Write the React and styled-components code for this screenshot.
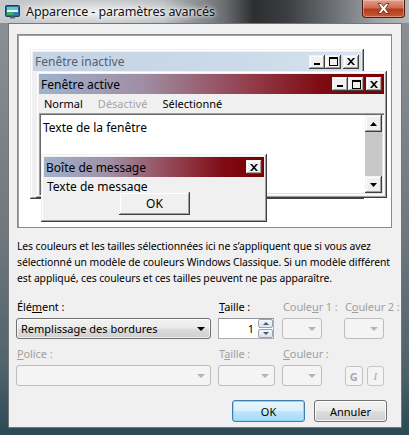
import React from 'react';
import styled, { createGlobalStyle, css } from 'styled-components';

const GlobalStyle = createGlobalStyle`
  html, body {
    margin: 0;
    padding: 0;
    background: #ffffff;
  }
  body {
    font-family: "Noto Sans", "Open Sans", sans-serif;
    font-size: 11px;
    color: #000;
  }
`;

const UI = `"Noto Sans", "Open Sans", sans-serif`;
const CLASSIC = `"Noto Sans", "DejaVu Sans", sans-serif`;

const Frame = styled.div`
  width: 409px;
  height: 435px;
  box-sizing: border-box;
  display: flex;
  flex-direction: column;
  background: linear-gradient(180deg, #8d9296 0%, #6f777c 55%, #4f626a 85%, #2c4955 100%);
  padding: 0 7px 7px 8px;
  font-family: ${UI};
  overflow: hidden;
`;

const TitleBar = styled.div`
  height: 23px;
  margin: 0 -7px 0 -8px;
  display: flex;
  align-items: center;
  position: relative;
  background:
    radial-gradient(ellipse 160px 22px at 100px 12px, rgba(255, 255, 255, 0.75), rgba(255, 255, 255, 0) 70%),
    linear-gradient(90deg, #c4c8cb 0%, #b6babd 40%, #6a6d70 55%, #2d2e30 62%, #3b3d40 70%, #6e7276 82%, #9ea3a7 92%, #b4b8bb 100%);
`;

const AppIcon = styled.svg`
  width: 15px;
  height: 15px;
  margin: 0 6px 0 5px;
`;

const TitleText = styled.span`
  font-size: 12.5px;
  color: #111;
  letter-spacing: -0.1px;
  text-shadow: 0 0 6px #fff, 0 0 3px #fff;
`;

const CloseButton = styled.div`
  position: absolute;
  right: 4px;
  top: 0;
  width: 43px;
  height: 18px;
  border: 1px solid #4a1c12;
  border-top: none;
  border-radius: 0 0 4px 4px;
  box-sizing: border-box;
  background: linear-gradient(180deg, #e2a08c 0%, #d06c50 45%, #b43a1c 55%, #c85a36 100%);
  display: flex;
  align-items: center;
  justify-content: center;
  box-shadow: inset 0 0 0 1px rgba(255, 220, 200, 0.4);
`;

const Client = styled.div`
  flex: 1;
  background: #f0f0f0;
  border: 1px solid #70767a;
  display: flex;
  flex-direction: column;
  padding: 10px 14px 0 8px;
  box-sizing: border-box;
`;

const Preview = styled.div`
  position: relative;
  height: 192px;
  margin-right: -5px;
  background: #ffffff;
  border: 1px solid #8a8a8a;
  box-shadow: inset 1px 1px 0 #a0a0a0;
  overflow: hidden;
`;

const raised = css`
  background: #f0f0f0;
  box-shadow:
    inset -1px -1px 0 #404040,
    inset 1px 1px 0 #f0f0f0,
    inset -2px -2px 0 #a0a0a0,
    inset 2px 2px 0 #ffffff;
`;

const MiniWindow = styled.div`
  position: absolute;
  box-sizing: border-box;
  padding: 3px;
  display: flex;
  flex-direction: column;
  ${raised}
`;

const MiniTitle = styled.div`
  height: ${(p) => p.$h || 20}px;
  flex: none;
  display: flex;
  align-items: center;
  justify-content: space-between;
  padding: 0 2px 0 2px;
  font-family: ${CLASSIC};
  font-size: 12px;
  color: ${(p) => (p.$active ? '#000' : '#56606c')};
  background: ${(p) =>
    p.$active
      ? 'linear-gradient(90deg, #9fb3cd 0%, #a08ea4 30%, #93404f 60%, #7e0a12 82%, #7c0000 100%)'
      : 'linear-gradient(90deg, #c4d3e4 0%, #cbd9e8 60%, #d6e2ef 100%)'};
`;

const Caption = styled.span`
  white-space: nowrap;
`;

const CapButtons = styled.div`
  display: flex;
`;

const CapButton = styled.div`
  width: 16px;
  height: 14px;
  margin-left: ${(p) => (p.$gap ? 2 : 0)}px;
  box-sizing: border-box;
  display: flex;
  align-items: center;
  justify-content: center;
  ${raised}
`;

const MenuRow = styled.div`
  height: 18px;
  flex: none;
  display: flex;
  align-items: center;
  gap: 15px;
  font-family: ${CLASSIC};
  font-size: 11px;
  padding-left: 5px;
`;

const MenuItem = styled.span`
  color: ${(p) => (p.$disabled ? '#a6a6a6' : '#000')};
`;

const TextArea = styled.div`
  flex: 1;
  display: flex;
  background: #ffffff;
  box-shadow:
    inset 1px 1px 0 #a0a0a0,
    inset 2px 2px 0 #696969,
    inset -1px -1px 0 #ffffff,
    inset -2px -2px 0 #e3e3e3;
  padding: 2px;
  margin-top: 1px;
`;

const TextBody = styled.div`
  flex: 1;
  padding: 4px 2px;
  font-family: ${CLASSIC};
  font-size: 12px;
`;

const ScrollBar = styled.div`
  width: 17px;
  display: flex;
  flex-direction: column;
  background: #c8c8c8;
`;

const ScrollArrow = styled.div`
  height: 17px;
  box-sizing: border-box;
  display: flex;
  align-items: center;
  justify-content: center;
  ${raised}
`;

const ScrollTrack = styled.div`
  flex: 1;
`;

const MsgBody = styled.div`
  height: 14px;
  flex: none;
  overflow: hidden;
  font-family: ${CLASSIC};
  font-size: 12px;
  line-height: 18px;
  padding-left: 3px;
  margin-top: 1px;
`;

const MsgFooter = styled.div`
  display: flex;
  padding-left: 75px;
`;

const MiniButton = styled.div`
  width: 71px;
  height: 23px;
  box-sizing: border-box;
  display: flex;
  align-items: center;
  justify-content: center;
  font-family: ${CLASSIC};
  font-size: 12px;
  ${raised}
`;

const Description = styled.p`
  margin: 10px 0 0 0;
  font-size: 10.4px;
  line-height: 16px;
  white-space: nowrap;
  letter-spacing: -0.1px;
  color: #000;
`;

const Fields = styled.div`
  margin-top: 13px;
  display: grid;
  grid-template-columns: 195px 57px 55px 40px;
  column-gap: 7px;
  margin-left: -1px;
`;

const Label = styled.div`
  font-size: 11px;
  height: 19px;
  padding-left: 1px;
  white-space: nowrap;
  letter-spacing: -0.1px;
  color: ${(p) => (p.$disabled ? '#a0a0a0' : '#000')};
  margin-top: ${(p) => (p.$second ? 7 : 0)}px;
`;

const Combo = styled.div`
  width: ${(p) => p.$w || 195}px;
  height: 21px;
  box-sizing: border-box;
  border: 1px solid ${(p) => (p.$disabled ? '#bcbcbc' : '#707070')};
  border-radius: 3px;
  display: flex;
  align-items: center;
  justify-content: space-between;
  padding: 0 5px 0 4px;
  font-size: 11px;
  background: ${(p) =>
    p.$disabled
      ? '#f4f4f4'
      : 'linear-gradient(180deg, #f2f2f2 0%, #ebebeb 48%, #dddddd 52%, #cfcfcf 100%)'};
  box-shadow: ${(p) => (p.$disabled ? 'none' : 'inset 0 0 0 1px rgba(255,255,255,0.7)')};
`;

const Arrow = styled.span`
  width: 0;
  height: 0;
  border-left: 4px solid transparent;
  border-right: 4px solid transparent;
  border-top: 4px solid ${(p) => (p.$disabled ? '#b4b4b4' : '#000')};
  margin-top: 1px;
`;

const Spin = styled.div`
  width: 56px;
  height: 21px;
  box-sizing: border-box;
  display: flex;
  border: 1px solid #abadb3;
  border-top-color: #8e9197;
  background: #fff;
`;

const SpinValue = styled.div`
  flex: 1;
  text-align: right;
  padding-right: 4px;
  font-size: 11px;
  line-height: 19px;
`;

const SpinButtons = styled.div`
  width: 15px;
  display: flex;
  flex-direction: column;
  gap: 1px;
`;

const SpinButton = styled.div`
  flex: 1;
  box-sizing: border-box;
  border: 1px solid #9aa3b0;
  border-radius: 2px;
  background: linear-gradient(180deg, #f4f6f9 0%, #dde3ea 100%);
  display: flex;
  align-items: center;
  justify-content: center;
`;

const SmallArrow = styled.span`
  width: 0;
  height: 0;
  border-left: 3px solid transparent;
  border-right: 3px solid transparent;
  ${(p) => (p.$up ? 'border-bottom: 3px solid #3c5a82;' : 'border-top: 3px solid #3c5a82;')}
`;

const StyleButtons = styled.div`
  display: flex;
  gap: 4px;
  padding-left: 1px;
`;

const StyleButton = styled.div`
  width: 18px;
  height: 20px;
  margin-top: 1px;
  box-sizing: border-box;
  border: 1px solid #c4c4c4;
  border-radius: 3px;
  background: #f4f4f4;
  display: flex;
  align-items: center;
  justify-content: center;
  font-size: 11px;
  color: #a8a8a8;
  font-weight: ${(p) => (p.$bold ? 700 : 400)};
  font-style: ${(p) => (p.$italic ? 'italic' : 'normal')};
  font-family: ${(p) => (p.$italic ? '"Liberation Serif", serif' : UI)};
`;

const Footer = styled.div`
  margin-top: 14px;
  display: flex;
  justify-content: flex-end;
  gap: 9px;
`;

const DialogButton = styled.div`
  width: 73px;
  height: 22px;
  box-sizing: border-box;
  border-radius: 3px;
  display: flex;
  align-items: center;
  justify-content: center;
  font-size: 11px;
  border: 1px solid ${(p) => (p.$primary ? '#3c7fb1' : '#707070')};
  background: ${(p) =>
    p.$primary
      ? 'linear-gradient(180deg, #eaf6fd 0%, #d9f0fc 48%, #bee6fd 52%, #a7d9f5 100%)'
      : 'linear-gradient(180deg, #f2f2f2 0%, #ebebeb 48%, #dddddd 52%, #cfcfcf 100%)'};
  box-shadow: ${(p) =>
    p.$primary ? 'inset 0 0 0 1px #8ad6f6' : 'inset 0 0 0 1px rgba(255,255,255,0.8)'};
`;

const Glyph = ({ type }) => {
  if (type === 'min') {
    return (
      <svg width="8" height="8" viewBox="0 0 8 8">
        <rect x="1" y="5" width="6" height="2" fill="#000" />
      </svg>
    );
  }
  if (type === 'max') {
    return (
      <svg width="9" height="9" viewBox="0 0 9 9">
        <rect x="0.5" y="0.5" width="8" height="8" fill="none" stroke="#000" />
        <rect x="0" y="0" width="9" height="2" fill="#000" />
      </svg>
    );
  }
  return (
    <svg width="8" height="7" viewBox="0 0 8 7">
      <path d="M0 0h2l2 2.2L6 0h2L5 3.5 8 7H6L4 4.8 2 7H0l3-3.5z" fill="#000" />
    </svg>
  );
};

const TriUp = () => (
  <svg width="7" height="4" viewBox="0 0 7 4">
    <path d="M3.5 0L7 4H0z" fill="#000" />
  </svg>
);

const TriDown = () => (
  <svg width="7" height="4" viewBox="0 0 7 4">
    <path d="M0 0h7L3.5 4z" fill="#000" />
  </svg>
);

const CaptionButtons = () => (
  <CapButtons>
    <CapButton><Glyph type="min" /></CapButton>
    <CapButton><Glyph type="max" /></CapButton>
    <CapButton $gap><Glyph type="close" /></CapButton>
  </CapButtons>
);

const App = () => (
  <>
    <GlobalStyle />
    <Frame>
      <TitleBar>
        <AppIcon viewBox="0 0 15 15">
          <rect x="0.5" y="1.5" width="14" height="11" rx="1" fill="#2f6f8f" stroke="#1d3f55" />
          <rect x="2" y="3" width="11" height="3" fill="#66c0d8" />
          <rect x="2" y="6" width="11" height="2" fill="#e8f4f8" />
          <rect x="2" y="8" width="6" height="3" fill="#3fae5c" />
          <rect x="8" y="8" width="5" height="3" fill="#2b7fc0" />
          <rect x="5" y="12.5" width="5" height="2" fill="#5d6d78" />
        </AppIcon>
        <TitleText>Apparence - paramètres avancés</TitleText>
        <CloseButton>
          <svg width="13" height="11" viewBox="0 0 13 11">
            <path
              d="M1 0.5h3l2.5 3 2.5-3h3L8.5 5.5 12 10.5H9L6.5 7.5 4 10.5H1L4.5 5.5z"
              fill="#fff"
              stroke="#5a2114"
              strokeWidth="0.8"
            />
          </svg>
        </CloseButton>
      </TitleBar>

      <Client>
        <Preview>
          <MiniWindow style={{ left: 12, top: 14, width: 334, height: 150 }}>
            <MiniTitle $h={19}>
              <Caption>Fenêtre inactive</Caption>
              <CaptionButtons />
            </MiniTitle>
          </MiniWindow>

          <MiniWindow style={{ left: 18, top: 36, width: 351, height: 127 }}>
            <MiniTitle $active>
              <Caption>Fenêtre active</Caption>
              <CaptionButtons />
            </MiniTitle>
            <MenuRow>
              <MenuItem>Normal</MenuItem>
              <MenuItem $disabled>Désactivé</MenuItem>
              <MenuItem>Sélectionné</MenuItem>
            </MenuRow>
            <TextArea>
              <TextBody>Texte de la fenêtre</TextBody>
              <ScrollBar>
                <ScrollArrow><TriUp /></ScrollArrow>
                <ScrollTrack />
                <ScrollArrow><TriDown /></ScrollArrow>
              </ScrollBar>
            </TextArea>
          </MiniWindow>

          <MiniWindow style={{ left: 23, top: 119, width: 226, height: 68 }}>
            <MiniTitle $active>
              <Caption>Boîte de message</Caption>
              <CapButton><Glyph type="close" /></CapButton>
            </MiniTitle>
            <MsgBody>Texte de message</MsgBody>
            <MsgFooter>
              <MiniButton>OK</MiniButton>
            </MsgFooter>
          </MiniWindow>
        </Preview>

        <Description>
          Les couleurs et les tailles sélectionnées ici ne s’appliquent que si vous avez
          <br />
          sélectionné un modèle de couleurs Windows Classique. Si un modèle différent
          <br />
          est appliqué, ces couleurs et ces tailles peuvent ne pas apparaître.
        </Description>

        <Fields>
          <Label>Élé<u>m</u>ent :</Label>
          <Label><u>T</u>aille :</Label>
          <Label $disabled>Coule<u>u</u>r 1 :</Label>
          <Label $disabled>C<u>o</u>uleur 2 :</Label>

          <Combo>
            <span>Remplissage des bordures</span>
            <Arrow />
          </Combo>
          <Spin>
            <SpinValue>1</SpinValue>
            <SpinButtons>
              <SpinButton><SmallArrow $up /></SpinButton>
              <SpinButton><SmallArrow /></SpinButton>
            </SpinButtons>
          </Spin>
          <Combo $w={40} $disabled><span /><Arrow $disabled /></Combo>
          <Combo $w={40} $disabled><span /><Arrow $disabled /></Combo>

          <Label $disabled $second><u>P</u>olice :</Label>
          <Label $disabled $second>T<u>a</u>ille :</Label>
          <Label $disabled $second><u>C</u>ouleur :</Label>
          <Label $second />

          <Combo $disabled><span /><Arrow $disabled /></Combo>
          <Combo $w={57} $disabled><span /><Arrow $disabled /></Combo>
          <Combo $w={40} $disabled><span /><Arrow $disabled /></Combo>
          <StyleButtons>
            <StyleButton $bold>G</StyleButton>
            <StyleButton $italic>I</StyleButton>
          </StyleButtons>
        </Fields>

        <Footer>
          <DialogButton $primary>OK</DialogButton>
          <DialogButton>Annuler</DialogButton>
        </Footer>
      </Client>
    </Frame>
  </>
);

export default App;
